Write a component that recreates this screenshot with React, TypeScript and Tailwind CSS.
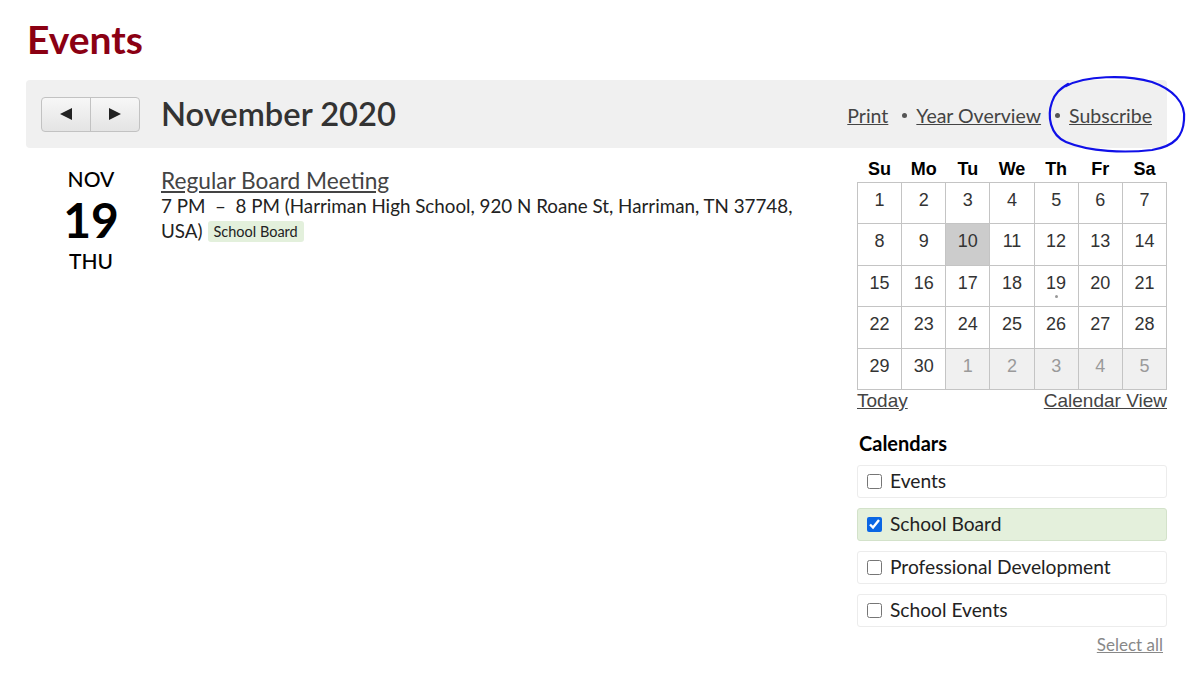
import React from "react";

const lato = { fontFamily: "Lato, 'Noto Sans', sans-serif" };
const arial = { fontFamily: "'Liberation Sans', Arial, sans-serif" };

const weeks: number[][] = [
  [1, 2, 3, 4, 5, 6, 7],
  [8, 9, 10, 11, 12, 13, 14],
  [15, 16, 17, 18, 19, 20, 21],
  [22, 23, 24, 25, 26, 27, 28],
  [29, 30, 1, 2, 3, 4, 5],
];

const calendars = [
  { name: "Events", checked: false },
  { name: "School Board", checked: true },
  { name: "Professional Development", checked: false },
  { name: "School Events", checked: false },
];

function MiniCalendar() {
  return (
    <div style={arial}>
      <table className="w-[310px] border-collapse table-fixed">
        <thead>
          <tr>
            {["Su", "Mo", "Tu", "We", "Th", "Fr", "Sa"].map((d) => (
              <th key={d} className="h-[24px] pb-[2px] text-[18px] font-bold text-black leading-none">
                {d}
              </th>
            ))}
          </tr>
        </thead>
        <tbody>
          {weeks.map((week, wi) => (
            <tr key={wi}>
              {week.map((day, di) => {
                const nextMonth = wi === 4 && di > 1;
                const today = wi === 1 && di === 2;
                return (
                  <td
                    key={di}
                    className={`relative h-[41.5px] border border-[#c4c4c4] text-center align-top pt-[7px] text-[18px] leading-[20px] ${
                      today ? "bg-[#cccccc] text-[#333]" : nextMonth ? "bg-[#f0f0f0] text-[#9a9a9a]" : "bg-white text-[#333]"
                    }`}
                  >
                    {day}
                    {wi === 2 && di === 4 && (
                      <span className="absolute left-1/2 top-[29px] -ml-[1.5px] w-[3px] h-[3px] rounded-full bg-[#999]" />
                    )}
                  </td>
                );
              })}
            </tr>
          ))}
        </tbody>
      </table>
      <div className="flex justify-between text-[19px] text-[#444] leading-[22px]">
        <a className="underline">Today</a>
        <a className="underline">Calendar View</a>
      </div>
    </div>
  );
}

export default function App() {
  return (
    <div className="relative w-[1200px] h-[673px] bg-white overflow-hidden" style={lato}>
      <div className="pl-[26px] w-[1167px]">
        <h1 className="pt-[16px] h-[80px] text-[39px] font-bold text-[#8b0013] leading-[46px] pl-[1px]">Events</h1>

        {/* Toolbar */}
        <div className="flex items-center h-[68px] bg-[#f0f0f0] rounded-[4px] pl-[15px] pr-[15px]">
          <div className="flex h-[35px] rounded-[4px] border border-[#c2c2c2] bg-gradient-to-b from-[#f7f7f7] to-[#e4e4e4] overflow-hidden">
            <button className="w-[49px] flex items-center justify-center border-r border-[#c2c2c2]">
              <svg width="14" height="14" viewBox="0 0 14 14">
                <path d="M13 1 L1 7 L13 13 Z" fill="#222" />
              </svg>
            </button>
            <button className="w-[48px] flex items-center justify-center">
              <svg width="14" height="14" viewBox="0 0 14 14">
                <path d="M1 1 L13 7 L1 13 Z" fill="#222" />
              </svg>
            </button>
          </div>
          <h2 className="ml-[21px] text-[32.7px] font-semibold text-[#333] leading-none">November 2020</h2>
          <div className="ml-auto flex items-center text-[19.5px] text-[#444] pt-[3px]">
            <a className="underline">Print</a>
            <span className="ml-[14px] mr-[9px] w-[5px] h-[5px] rounded-full bg-[#555]" />
            <a className="underline">Year Overview</a>
            <span className="ml-[14px] mr-[9px] w-[5px] h-[5px] rounded-full bg-[#555]" />
            <a className="underline">Subscribe</a>
          </div>
        </div>

        <div className="flex mt-[10px]">
          {/* Event list */}
          <div className="flex-1 flex pr-[40px]">
            <div className="w-[130px] flex flex-col items-center text-black">
              <div className="text-[21px] font-medium leading-[24px] pt-[9px]">NOV</div>
              <div className="text-[48px] font-bold leading-[50px] mt-[4px]">19</div>
              <div className="text-[21px] font-medium leading-[24px] mt-[4px]">THU</div>
            </div>
            <div className="flex-1 pt-[10px] ml-[5px]">
              <a className="block text-[22.7px] text-[#444] underline leading-[26px]">Regular Board Meeting</a>
              <p className="text-[18.8px] text-[#222] leading-[25px] mt-[-1px] max-w-[640px]">
                7 PM &nbsp;–&nbsp; 8 PM (Harriman High School, 920 N Roane St, Harriman, TN 37748, USA)
                <span className="inline-block ml-[5px] bg-[#e3f0dc] rounded-[3px] px-[6px] text-[14.5px] leading-[21px] text-[#222] align-[1px]">
                  School Board
                </span>
              </p>
            </div>
          </div>

          {/* Sidebar */}
          <div className="w-[310px]">
            <MiniCalendar />
            <h3 className="mt-[19px] ml-[2px] text-[20px] font-bold text-black leading-[24px]">Calendars</h3>
            <div className="mt-[10px] flex flex-col gap-[10px]">
              {calendars.map((c) => (
                <label
                  key={c.name}
                  className={`flex items-center h-[33px] rounded-[3px] border pl-[9px] text-[19.2px] text-[#222] ${
                    c.checked ? "bg-[#e4f0dc] border-[#d3e2ca]" : "bg-white border-[#ececec]"
                  }`}
                >
                  <input type="checkbox" defaultChecked={c.checked} className="w-[15px] h-[15px] m-0 mr-[8px] accent-[#0a66e4]" />
                  {c.name}
                </label>
              ))}
            </div>
            <div className="mt-[8px] flex justify-end pr-[4px]">
              <a className="text-[17px] text-[#888] underline leading-[20px]">Select all</a>
            </div>
          </div>
        </div>
      </div>

      {/* hand-drawn annotation around Subscribe */}
      <svg className="absolute left-0 top-0 pointer-events-none" width="1200" height="673">
        <path
          d="M1066,86 C1085,76 1125,74 1152,82 C1172,89 1186,102 1184,120 C1183,135 1176,146 1152,150 C1125,153 1090,152 1066,142 C1050,135 1047,116 1052,102 C1055,93 1060,89 1068,84"
          fill="none"
          stroke="#1010e8"
          strokeWidth="2.2"
          strokeLinecap="round"
        />
      </svg>
    </div>
  );
}
